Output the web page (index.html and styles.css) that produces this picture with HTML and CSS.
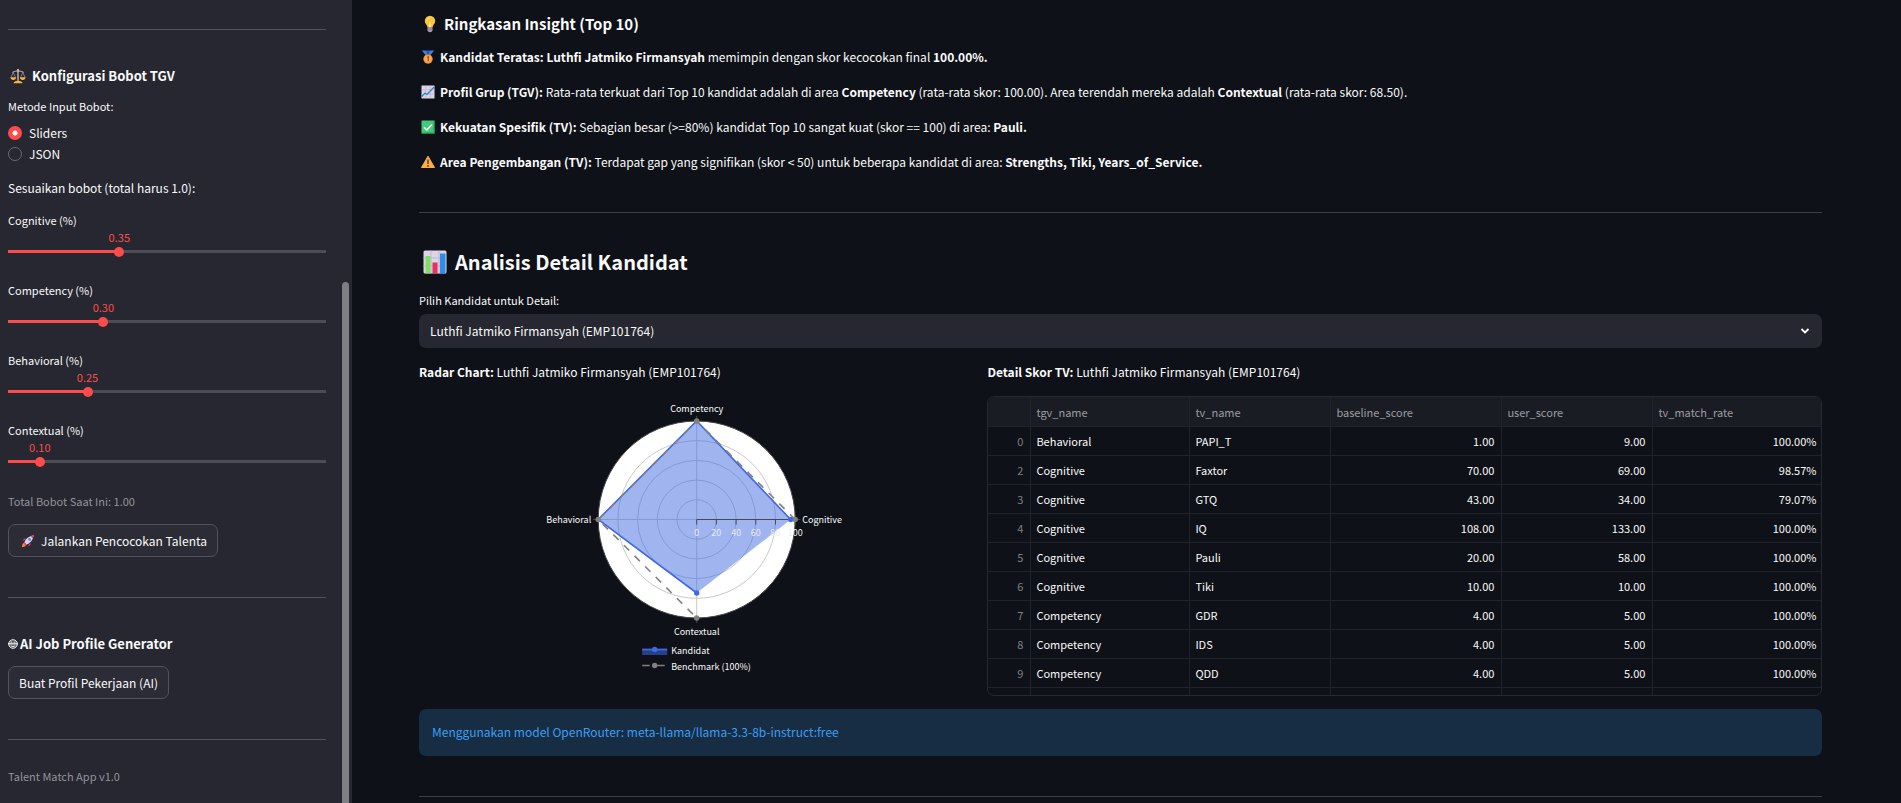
FILE: index.html
```html
<!DOCTYPE html>
<html lang="id">
<head>
<meta charset="utf-8">
<title>Talent Match App</title>
<link rel="stylesheet" href="styles.css">
</head>
<body>
<div class="app">
  <aside class="sidebar">
    <div class="sidebar-content">
      <hr class="rule">
      <h3 class="side-title scale-title">
        <svg class="icon-side" viewBox="0 0 16 16" aria-hidden="true">
          <path d="M8 1v12" stroke="#c9b6cf" stroke-width="1.4"/>
          <path d="M2.5 4.5Q5.500 2.500 8 3.200Q10.500 2.500 13.500 4.500" fill="none" stroke="#c9b6cf" stroke-width="1.200"/>
          <path d="M3.200 4.500L1 9.500M3.200 4.500L5.600 9.500M12.800 4.500L10.400 9.500M12.800 4.500L15 9.500" stroke="#9e8aa8" stroke-width=".8"/>
          <path d="M.4 9.300H6.200Q5.800 12 3.300 12T.4 9.300ZM9.800 9.300H15.600Q15.200 12 12.700 12T9.800 9.300Z" fill="#f9b23c"/>
          <path d="M3.500 15.300Q4 13 8 12.800Q12 13 12.500 15.300Z" fill="#fbb53e"/>
          <circle cx="8" cy="2.200" r="1.100" fill="#f9b23c"/>
        </svg>
        <span>Konfigurasi Bobot TGV</span>
      </h3>
      <fieldset class="radios">
        <legend class="label">Metode Input Bobot:</legend>
        <label class="radio"><input type="radio" name="method" checked>Sliders</label>
        <label class="radio"><input type="radio" name="method">JSON</label>
      </fieldset>
      <p class="side-text">Sesuaikan bobot (total harus 1.0):</p>
      <div class="sliders">
        <div class="slider" style="--pos:35%">
          <label class="label" for="w1">Cognitive (%)</label>
          <output class="value" for="w1">0.35</output>
          <input id="w1" type="range" min="0" max="1" step="0.05" value="0.35">
        </div>
        <div class="slider" style="--pos:30%">
          <label class="label" for="w2">Competency (%)</label>
          <output class="value" for="w2">0.30</output>
          <input id="w2" type="range" min="0" max="1" step="0.05" value="0.30">
        </div>
        <div class="slider" style="--pos:25%">
          <label class="label" for="w3">Behavioral (%)</label>
          <output class="value" for="w3">0.25</output>
          <input id="w3" type="range" min="0" max="1" step="0.05" value="0.25">
        </div>
        <div class="slider" style="--pos:10%">
          <label class="label" for="w4">Contextual (%)</label>
          <output class="value" for="w4">0.10</output>
          <input id="w4" type="range" min="0" max="1" step="0.05" value="0.10">
        </div>
      </div>
      <p class="caption total">Total Bobot Saat Ini: 1.00</p>
      <button class="button" type="button">
        <svg class="icon-rocket" viewBox="0 0 16 16" aria-hidden="true">
          <path d="M5 6.500L1.500 8Q2.500 5 5.500 4.500ZM9.500 11L8 14.500Q11 13.500 11.500 10.500Z" fill="#e8305f"/>
          <path d="M4 9.500L6.500 12Q5 15 1 15Q1 11 4 9.500Z" fill="#ff8a2b"/>
          <path d="M3.800 9.700Q6 3 14.500 1.500Q13 10 6.300 12.200Z" fill="#d9d3e6"/>
          <path d="M11 2.500Q13 1.600 14.800 1.200Q14.400 3 13.500 5Z" fill="#f0386b"/>
          <circle cx="9.800" cy="6.200" r="1.600" fill="#3f8fe8"/>
          <path d="M4 9.500L6.500 12L5 13L3 11Z" fill="#f0386b"/>
        </svg>
        <span>Jalankan Pencocokan Talenta</span>
      </button>
      <hr class="rule">
      <h3 class="side-title ai-title">
        <svg class="icon-ai" viewBox="0 0 10 10" aria-hidden="true">
          <circle cx="5" cy="5" r="4.300" fill="#55565f" stroke="#f2f2f4" stroke-width="1"/>
          <path d="M0 4.800H10" stroke="#f2f2f4" stroke-width="1.200"/>
          <path d="M2.600 3.200H4.200M5.800 3.200H7.400M2.800 6.800Q5 8.500 7.200 6.800" stroke="#f2f2f4" stroke-width="1" fill="none"/>
        </svg>
        <span>AI Job Profile Generator</span>
      </h3>
      <button class="button" type="button">Buat Profil Pekerjaan (AI)</button>
      <hr class="rule">
      <p class="caption version">Talent Match App v1.0</p>
    </div>
    <div class="scroll-thumb"></div>
  </aside>

  <main class="main">
    <h3 class="insight-title">
      <svg class="icon-bulb" viewBox="0 0 18 18" aria-hidden="true">
        <path d="M9 .8A5.200 5.200 0 0 1 14.200 6Q14.200 8.200 12.400 10Q11.600 11 11.500 12.500H6.500Q6.400 11 5.600 10Q3.800 8.200 3.800 6A5.200 5.200 0 0 1 9 .8Z" fill="#fcc63c"/>
        <path d="M7.500 2.500Q5.400 3.500 5.400 6Q5.600 3.800 9 3Z" fill="#fff0a0"/>
        <path d="M8 12.500V7.500H10V12.500" fill="#ffe680"/>
        <path d="M6.500 12.500H11.500V15.500Q11 17.200 9 17.200T6.500 15.500Z" fill="#a99abb"/>
        <path d="M6.500 14.200H11.500" stroke="#75658c" stroke-width=".7"/>
      </svg>
      <span>Ringkasan Insight (Top 10)</span>
    </h3>
    <div class="insights">
      <p class="insight">
        <svg class="icon" viewBox="0 0 14 14" aria-hidden="true">
          <path d="M.8.500H5L9 5H4.500ZM13.200.500H9L5 5H9.500Z" fill="#3b82ec"/>
          <path d="M5 .5H9L8 4H6Z" fill="#2360bd"/>
          <circle cx="7" cy="9" r="4.700" fill="#f7963b"/>
          <circle cx="7" cy="9" r="3.300" fill="#fba94e"/>
          <path d="M6 7.500L7.300 6.800V11.200" fill="none" stroke="#a8501c" stroke-width="1.200"/>
        </svg>
        <span><b>Kandidat Teratas: Luthfi Jatmiko Firmansyah</b> memimpin dengan skor kecocokan final <b>100.00%.</b></span>
      </p>
      <p class="insight">
        <svg class="icon" viewBox="0 0 14 14" aria-hidden="true">
          <rect x=".5" y=".5" width="13" height="13" fill="#dcd5e6"/>
          <path d="M4.800 .5V13.500M9.200 .5V13.500M.5 4.800H13.500M.5 9.200H13.500" stroke="#b9afc9" stroke-width=".6"/>
          <path d="M.8 11.500L4 8L6 9.500L13.200 2" fill="none" stroke="#2c86d8" stroke-width="1.300"/>
        </svg>
        <span><b>Profil Grup (TGV):</b> Rata-rata terkuat dari Top 10 kandidat adalah di area <b>Competency</b> (rata-rata skor: 100.00). Area terendah mereka adalah <b>Contextual</b> (rata-rata skor: 68.50).</span>
      </p>
      <p class="insight">
        <svg class="icon" viewBox="0 0 14 14" aria-hidden="true">
          <rect x=".5" y=".5" width="13" height="13" rx=".5" fill="#42c97a"/>
          <path d="M.5 13H13.500M13 .5V13.500" stroke="#279a5c" stroke-width=".8"/>
          <path d="M3 7.200L5.800 10L11 4.400" fill="none" stroke="#fff" stroke-width="1.500"/>
        </svg>
        <span><b>Kekuatan Spesifik (TV):</b> Sebagian besar (&gt;=80%) kandidat Top 10 sangat kuat (skor == 100) di area: <b>Pauli.</b></span>
      </p>
      <p class="insight">
        <svg class="icon" viewBox="0 0 14 14" aria-hidden="true">
          <path d="M7 1.200L13.500 12.500H.5Z" fill="#fbb040" stroke="#fbb040" stroke-linejoin="round"/>
          <path d="M7 4.500V9" stroke="#5b3a4c" stroke-width="1.500"/>
          <circle cx="7" cy="11" r=".9" fill="#5b3a4c"/>
        </svg>
        <span><b>Area Pengembangan (TV):</b> Terdapat gap yang signifikan (skor &lt; 50) untuk beberapa kandidat di area: <b>Strengths, Tiki, Years_of_Service.</b></span>
      </p>
    </div>
    <hr class="rule">
    <h2 class="detail-title">
      <svg class="icon-large" viewBox="0 0 24 24" aria-hidden="true">
        <rect x=".5" y=".5" width="23" height="23" rx="1.500" fill="#dcd5e6"/>
        <path d="M8 .5V23.500M16 .5V23.500M.5 8H23.500M.5 16H23.500" stroke="#b9afc9" stroke-width=".8"/>
        <path d="M2.500 6H7.500V23.500H2.500Z" fill="#86dc62"/>
        <path d="M9.500 12.500H14.500V23.500H9.500Z" fill="#ea2f66"/>
        <path d="M17 3.500H22.500V23.500H17Z" fill="#2f8ce8"/>
      </svg>
      <span>Analisis Detail Kandidat</span>
    </h2>
    <label class="label" for="candidate">Pilih Kandidat untuk Detail:</label>
    <div class="select-box">
      <select id="candidate"><option>Luthfi Jatmiko Firmansyah (EMP101764)</option></select>
      <svg class="chevron" viewBox="0 0 10 10" aria-hidden="true"><path d="M1.500 3L5 6.500L8.500 3" fill="none" stroke="#fff" stroke-width="1.800"/></svg>
    </div>

    <div class="columns">
      <section class="column">
        <p class="column-title"><b>Radar Chart:</b> Luthfi Jatmiko Firmansyah (EMP101764)</p>
        <svg class="radar" viewBox="0 0 556 299" role="img" aria-label="Radar Chart">
          <circle cx="277.500" cy="123.500" r="98.500" fill="#fff"/>
          <g fill="none" stroke="#c8c8c8">
            <circle cx="277.500" cy="123.500" r="19.700"/>
            <circle cx="277.500" cy="123.500" r="39.400"/>
            <circle cx="277.500" cy="123.500" r="59.100"/>
            <circle cx="277.500" cy="123.500" r="78.800"/>
            <path d="M179 123.500H376M277.500 25V222"/>
          </g>
          <path d="M371.500 123.500L277.500 25L179 123.500L277.500 197Z" fill="#4169e1" fill-opacity=".5"/>
          <path d="M371.500 123.500L277.500 25L179 123.500L277.500 197" fill="none" stroke="#4169e1" stroke-width="1.600"/>
          <path d="M376 123.500L277.500 25L179 123.500L277.500 222" fill="none" stroke="#808080" stroke-width="1.600" stroke-dasharray="7.500 7.500"/>
          <circle cx="277.500" cy="123.500" r="98.500" fill="none" stroke="#444"/>
          <path d="M277.500 123.500H376M277.500 123.500v5M297.200 123.500v5M316.900 123.500v5M336.600 123.500v5M356.300 123.500v5M376 123.500v5" stroke="#444a58" fill="none"/>
          <path d="M277.500 20v5M277.500 222v5M174 123.500h5M376 123.500h5" stroke="#444"/>
          <g fill="#4169e1"><circle cx="371.500" cy="123.500" r="2.700"/><circle cx="277.500" cy="197" r="2.700"/></g>
          <g fill="#808080"><circle cx="376" cy="123.500" r="2.700"/><circle cx="277.500" cy="25" r="2.700"/><circle cx="179" cy="123.500" r="2.700"/><circle cx="277.500" cy="222" r="2.700"/></g>
          <g class="tick-text">
            <text x="277.500" y="140">0</text><text x="297" y="140">20</text><text x="317" y="140">40</text><text x="336.500" y="140">60</text><text x="356" y="140">80</text><text x="376" y="140">100</text>
          </g>
          <g class="axis-text">
            <text x="277.500" y="16">Competency</text>
            <text x="277.500" y="239">Contextual</text>
            <text class="end" x="172" y="127">Behavioral</text>
            <text class="start" x="383" y="127">Cognitive</text>
            <text class="start" x="252" y="258">Kandidat</text>
            <text class="start" x="252" y="274">Benchmark (100%)</text>
          </g>
          <path d="M223 253.500H248V259H223Z" fill="#27408b"/>
          <path d="M223 253.500H248" stroke="#4169e1" stroke-width="1.800"/>
          <circle cx="235.500" cy="253.500" r="2.700" fill="#4169e1"/>
          <path d="M223 269.500H248" stroke="#808080" stroke-width="1.600" stroke-dasharray="7.500 7.500"/>
          <circle cx="235.500" cy="269.500" r="2.700" fill="#808080"/>
        </svg>
      </section>
      <section class="column">
        <p class="column-title"><b>Detail Skor TV:</b> Luthfi Jatmiko Firmansyah (EMP101764)</p>
        <div class="table-frame">
          <table>
            <colgroup><col class="c-index"><col class="c-group"><col class="c-name"><col class="c-base"><col class="c-user"><col class="c-rate"></colgroup>
            <thead><tr><th></th><th>tgv_name</th><th>tv_name</th><th>baseline_score</th><th>user_score</th><th>tv_match_rate</th></tr></thead>
            <tbody>
              <tr><td>0</td><td>Behavioral</td><td>PAPI_T</td><td>1.00</td><td>9.00</td><td>100.00%</td></tr>
              <tr><td>2</td><td>Cognitive</td><td>Faxtor</td><td>70.00</td><td>69.00</td><td>98.57%</td></tr>
              <tr><td>3</td><td>Cognitive</td><td>GTQ</td><td>43.00</td><td>34.00</td><td>79.07%</td></tr>
              <tr><td>4</td><td>Cognitive</td><td>IQ</td><td>108.00</td><td>133.00</td><td>100.00%</td></tr>
              <tr><td>5</td><td>Cognitive</td><td>Pauli</td><td>20.00</td><td>58.00</td><td>100.00%</td></tr>
              <tr><td>6</td><td>Cognitive</td><td>Tiki</td><td>10.00</td><td>10.00</td><td>100.00%</td></tr>
              <tr><td>7</td><td>Competency</td><td>GDR</td><td>4.00</td><td>5.00</td><td>100.00%</td></tr>
              <tr><td>8</td><td>Competency</td><td>IDS</td><td>4.00</td><td>5.00</td><td>100.00%</td></tr>
              <tr><td>9</td><td>Competency</td><td>QDD</td><td>4.00</td><td>5.00</td><td>100.00%</td></tr>
              <tr class="partial"><td></td><td></td><td></td><td></td><td></td><td></td></tr>
            </tbody>
          </table>
        </div>
      </section>
    </div>

    <div class="info">Menggunakan model OpenRouter: meta-llama/llama-3.3-8b-instruct:free</div>
    <hr class="rule">
  </main>
</div>
</body>
</html>
```
FILE: styles.css
```css
* { box-sizing: border-box; }
body {
  margin: 0;
  background: #0e1117;
  color: #fafafa;
  font-family: "Noto Sans CJK SC", "Noto Sans", sans-serif;
  font-size: 12px;
  line-height: 20px;
}
h2, h3, p, fieldset, legend { margin: 0; padding: 0; border: 0; }
button, select, input { font: inherit; color: inherit; margin: 0; }
svg { flex: none; display: block; }

.app { display: flex; height: 100vh; overflow: hidden; }
.rule { width: 100%; height: 1px; margin: 0; border: 0; background: #3d3e46; flex: none; }

/* Sidebar */
.sidebar {
  flex: none;
  width: 352px;
  padding: 29px 3px 0 8px;
  display: flex;
  gap: 16px;
  background: #262730;
}
.sidebar .rule { background: #52535c; }
.sidebar-content { flex: 1; display: flex; flex-direction: column; align-items: flex-start; }
.scroll-thumb { width: 7px; margin-top: 253px; border-radius: 4px 4px 0 0; background: #7f7e84; }
.side-title { display: flex; align-items: center; font-size: 13px; line-height: 24px; font-weight: 700; }
.scale-title { margin-top: 34px; padding-left: 2px; gap: 6px; }
.ai-title { margin: 34px 0 10px; gap: 2px; }
.icon-side { width: 16px; height: 16px; }
.icon-ai { width: 10px; height: 10px; }
.label { display: block; font-size: 11px; line-height: 18px; }
.radios { margin-top: 9px; }
.radios .label { margin-bottom: 7px; }
.radio { display: flex; align-items: center; gap: 7px; line-height: 21px; }
.radio input {
  appearance: none;
  width: 14px;
  height: 14px;
  border: 1px solid #686973;
  border-radius: 50%;
}
.radio input:checked { border: 0; background: radial-gradient(circle, #fff 2px, #ff4b4b 3px); }
.side-text { margin-top: 14px; }
.sliders { width: 100%; margin-top: 13px; display: grid; gap: 22px; }
.slider { display: grid; grid-template-rows: 20px 13px 15px; }
.value {
  display: flex;
  justify-content: center;
  width: 0;
  margin-left: var(--pos);
  font-size: 11px;
  line-height: 13px;
  color: #ff4b4b;
}
.slider input {
  appearance: none;
  width: calc(100% + 10px);
  height: 15px;
  margin: 0 -5px;
  background: linear-gradient(to right, #ff4b4b var(--pos), #4b4c56 var(--pos)) center / calc(100% - 10px) 3px no-repeat;
}
.slider input::-webkit-slider-thumb {
  appearance: none;
  width: 10px;
  height: 10px;
  border-radius: 50%;
  background: #ff4b4b;
}
.caption { font-size: 11px; color: #93939a; }
.total { margin-top: 22px; }
.button {
  display: flex;
  align-items: center;
  gap: 6px;
  height: 33px;
  padding: 0 10px;
  border: 1px solid #52535c;
  border-radius: 7px;
  background: #2b2c36;
}
.total + .button { margin: 13px 0 40px; padding-left: 12px; }
.ai-title + .button { margin-bottom: 40px; }
.icon-rocket { width: 14px; height: 14px; }
.version { margin-top: 26px; }

/* Main */
.main { flex: 1; min-width: 0; padding: 12px 79px 0 67px; }
.insight-title { display: flex; align-items: center; gap: 5px; padding-left: 2px; font-size: 15px; line-height: 24px; }
.icon-bulb { width: 18px; height: 18px; }
.insights { display: grid; gap: 15px; margin: 11px 0 40px; }
.insight { display: flex; align-items: center; gap: 5px; padding-left: 2px; }
.icon { width: 14px; height: 14px; }
.detail-title { display: flex; align-items: center; gap: 8px; margin: 31px 0 11px; padding-left: 4px; font-size: 20px; line-height: 36px; }
.icon-large { width: 24px; height: 24px; }
.select-box { position: relative; margin-top: 5px; }
.select-box select {
  display: block;
  appearance: none;
  width: 100%;
  height: 34px;
  padding: 0 11px;
  border: 0;
  border-radius: 7px;
  background: #262730;
}
.chevron { position: absolute; right: 12px; top: 12px; width: 10px; height: 10px; }
.columns { display: grid; grid-template-columns: 2fr 3fr; gap: 12px; margin-top: 14px; }
.column { min-width: 0; }
.column-title { margin-bottom: 14px; }
.radar { width: 100%; height: 299px; font-size: 9px; fill: #fafafa; }
.radar text { text-anchor: middle; }
.radar .start { text-anchor: start; }
.radar .end { text-anchor: end; }
.tick-text { fill: #e8ebf4; }

.table-frame { height: 300px; overflow: hidden; border: 1px solid #26282e; border-radius: 7px; }
table { width: 100%; table-layout: fixed; border-collapse: separate; border-spacing: 0; font-size: 11px; }
.c-index { width: 43px; }
.c-group { width: 159px; }
.c-name { width: 141px; }
.c-base { width: 171px; }
.c-user { width: 151px; }
.c-rate { width: 170px; }
th, td { height: 29px; padding: 0 7px 0 5px; border: 0 solid #202329; border-width: 0 1px 1px 0; text-align: right; line-height: 16px; }
th { height: 30px; padding-top: 1px; text-align: left; font-weight: 400; color: #9c9da1; background: #1a1c23; }
th:last-child, td:last-child { border-right: 0; }
td:first-child { color: #7f8085; }
td:nth-child(2), td:nth-child(3) { text-align: left; }

.info { margin: 13px 0 40px; padding: 12px 13px 14px; line-height: 21px; border-radius: 7px; background: #172d43; color: #3d9df3; }
```
